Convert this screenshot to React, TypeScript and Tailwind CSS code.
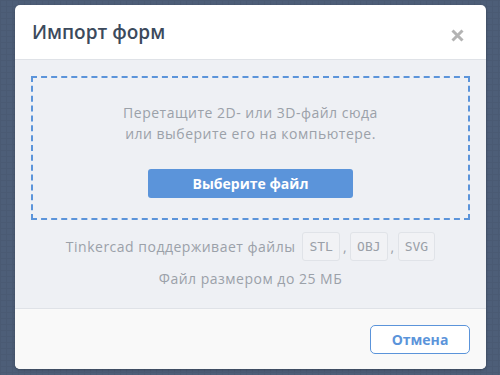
import React from 'react';

const FORMATS = ['STL', 'OBJ', 'SVG'];

const FormatBadge: React.FC<{ label: string }> = ({ label }) => (
    <span className="inline-flex items-center justify-center h-[29px] px-[6px] min-w-[36px] rounded-[3px] border border-[#e0e3e8] bg-[#f1f2f5] text-[13px] tracking-normal text-[#9aa0a8] font-['DejaVu_Sans_Mono',monospace]">
        {label}
    </span>
);

const App: React.FC = () => {
    return (
        <div className="w-[500px] h-[375px] overflow-hidden bg-[#4d5e78] bg-[linear-gradient(#4a5a73_1px,transparent_1px),linear-gradient(90deg,#4a5a73_1px,transparent_1px)] bg-[size:6px_6px] pl-[15px] pt-[5px] font-['Open_Sans',sans-serif]">
            <div className="w-[471px] h-[364px] rounded-[5px] bg-white overflow-hidden flex flex-col shadow-[0_1px_3px_rgba(0,0,0,0.25)]">
                {/* header */}
                <div className="h-[55px] shrink-0 flex items-center justify-between pl-[17px] pr-[22px] border-b border-[#dfe2e7]">
                    <h3 className="text-[19px] font-semibold text-[#3c4a5c]">Импорт форм</h3>
                    <button className="mt-[6px] w-[13px] h-[13px] flex items-center justify-center">
                        <svg width="13" height="13" viewBox="0 0 13 13">
                            <path d="M1.5 1.5 L11.5 11.5 M11.5 1.5 L1.5 11.5" stroke="#b3b3b3" strokeWidth="3" strokeLinecap="butt" />
                        </svg>
                    </button>
                </div>

                {/* body */}
                <div className="flex-1 bg-[#eef0f4] px-[16px] pt-[16px] flex flex-col items-center tracking-[0.5px]">
                    <div className="w-full h-[144px] border-2 border-dashed border-[#5b94da] flex flex-col items-center pt-[24px]">
                        <p className="text-[14px] leading-[21px] text-[#9ba1a9] text-center">
                            Перетащите 2D- или 3D-файл сюда
                            <br />
                            или выберите его на компьютере.
                        </p>
                        <button className="mt-[25px] w-[205px] h-[29px] rounded-[3px] bg-[#5b94da] text-white text-[14px] font-bold tracking-normal">
                            Выберите файл
                        </button>
                    </div>

                    <div className="mt-[12px] flex items-center gap-[3px] text-[14px] text-[#9ba1a9]">
                        <span className="mr-[4px]">Tinkercad поддерживает файлы</span>
                        {FORMATS.map((f, i) => (
                            <React.Fragment key={f}>
                                <FormatBadge label={f} />
                                {i < FORMATS.length - 1 && <span>,</span>}
                            </React.Fragment>
                        ))}
                    </div>
                    <p className="mt-[7px] text-[14px] leading-[21px] text-[#9ba1a9]">Файл размером до 25 МБ</p>
                </div>

                {/* footer */}
                <div className="h-[61px] shrink-0 bg-[#f9f9f9] border-t border-[#dfe2e7] flex items-center justify-end pr-[16px]">
                    <button className="w-[100px] h-[29px] rounded-[5px] border border-[#5b94da] bg-white text-[#5b94da] text-[14px] font-bold">
                        Отмена
                    </button>
                </div>
            </div>
        </div>
    );
};

export default App;
